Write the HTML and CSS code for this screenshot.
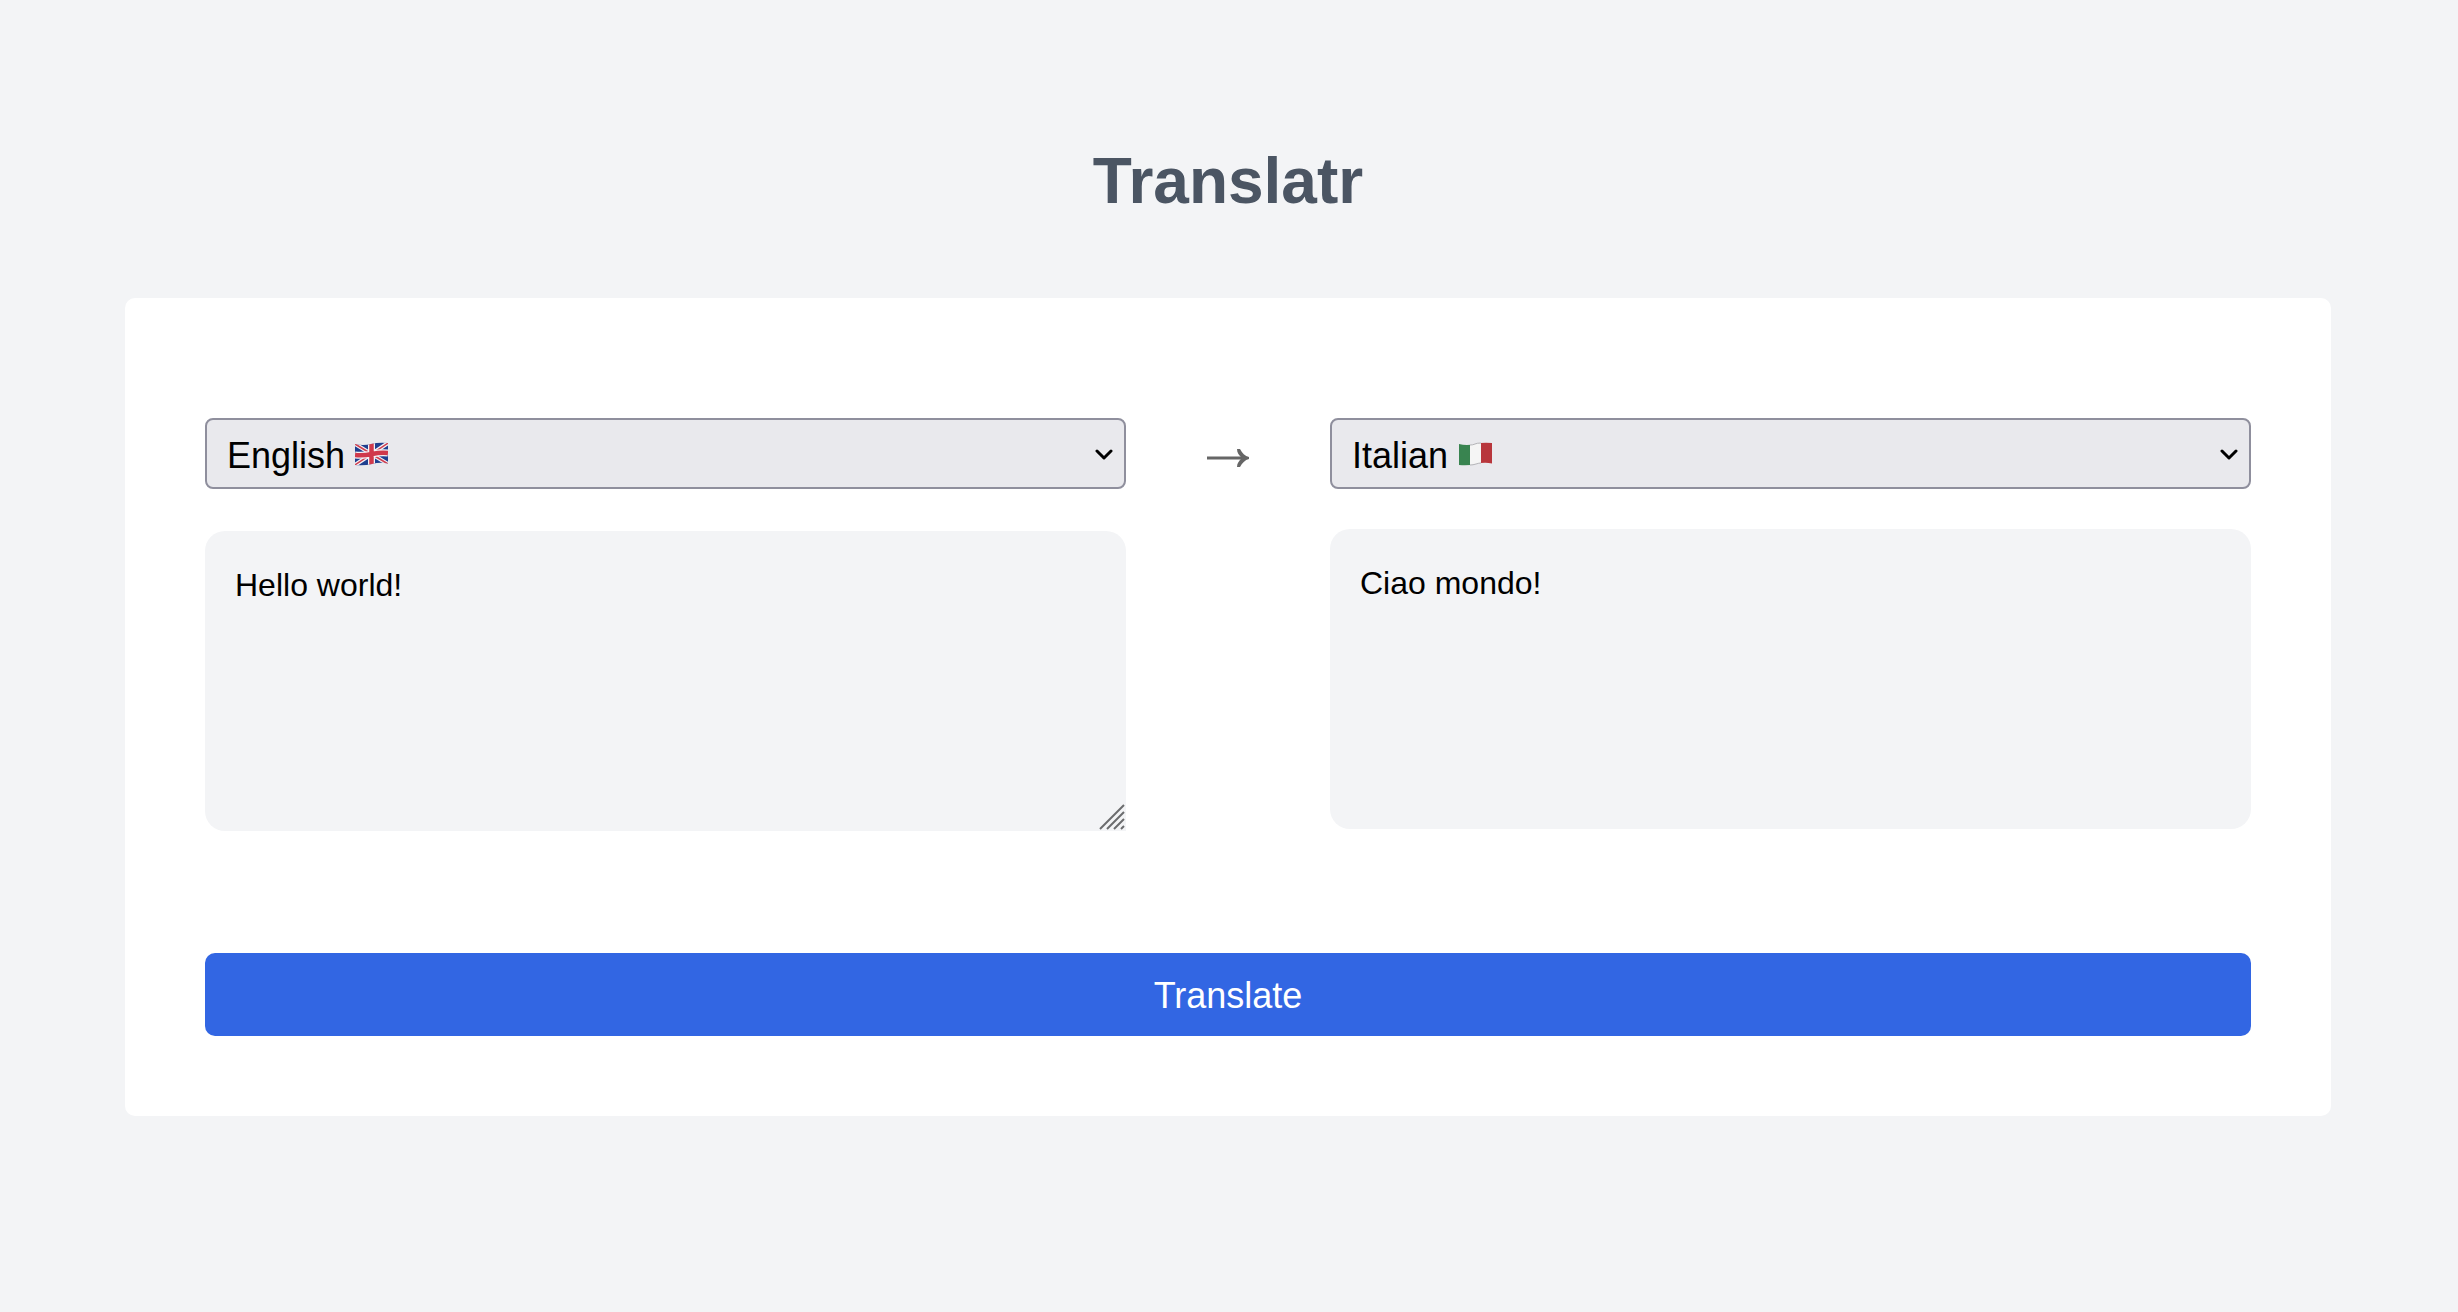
FILE: index.html
```html
<!DOCTYPE html>
<html lang="en">
<head>
<meta charset="utf-8">
<meta name="viewport" content="width=device-width, initial-scale=1">
<title>Translatr</title>
<link rel="stylesheet" href="styles.css">
</head>
<body>
<main class="page">
  <h1 class="title">Translatr</h1>
  <form class="card">
    <div class="columns">
      <div class="column">
        <div class="picker">
          <select class="select" aria-label="Source language">
            <option>English</option>
            <option>French</option>
            <option>Italian</option>
          </select>
          <svg class="flag flag-english" viewBox="0 0 33 24" aria-hidden="true">
            <clipPath id="wave-gb"><path d="M0 2Q8 4 16 2T33 1V21.500Q25 20 17 22T0 23Z"/></clipPath>
            <g clip-path="url(#wave-gb)">
              <path fill="#1f3f8f" d="M0 0h33v24H0z"/>
              <path d="M0 2 33 22M0 23 33 1" stroke="#f3f3f6" stroke-width="4"/>
              <path d="M0 2 33 22M0 23 33 1" stroke="#cf4051" stroke-width="1.500"/>
              <path d="M16.500 0v24M0 13Q8 14 17 12T33 11" fill="none" stroke="#f3f3f6" stroke-width="7"/>
              <path d="M16.500 0v24M0 13Q8 14 17 12T33 11" fill="none" stroke="#d0394b" stroke-width="4.500"/>
            </g>
          </svg>
          <svg class="chevron" viewBox="0 0 18 12" aria-hidden="true"><path d="m2 2 7 7 7-7"/></svg>
        </div>
        <div class="source">
          <textarea class="panel textarea" aria-label="Text to translate">Hello world!</textarea>
          <svg class="grip" viewBox="0 0 28 28" aria-hidden="true"><path d="M2 26 26 2M9 26 26 9M16 26l10-10M23 26l3-3"/></svg>
        </div>
      </div>
      <svg class="arrow" viewBox="0 0 44 20" aria-hidden="true"><path class="arrow-line" d="M1 10h38"/><path d="M31 1h3C36 5 39 8 43 9v2c-4 1-7 4-9 8h-3c0-4 2-6 5-9-3-3-5-5-5-9Z"/></svg>
      <div class="column">
        <div class="picker">
          <select class="select" aria-label="Target language">
            <option>Italian</option>
            <option>English</option>
            <option>French</option>
          </select>
          <svg class="flag flag-italian" viewBox="0 0 33 24" aria-hidden="true">
            <clipPath id="wave-it"><path d="M0 2Q8 4 16 2T33 1V21.500Q25 20 17 22T0 23Z"/></clipPath>
            <g clip-path="url(#wave-it)">
              <path fill="#f5f5f5" d="M0 0h33v24H0z"/>
              <path fill="#398450" d="M0 0h11v24H0z"/>
              <path fill="#b8363c" d="M22 0h11v24H22z"/>
            </g>
            <path d="M11 3Q14 3 16 2T22 1M11 23Q14 23 17 22T22 21" fill="none" stroke="#b4b4b8"/>
          </svg>
          <svg class="chevron" viewBox="0 0 18 12" aria-hidden="true"><path d="m2 2 7 7 7-7"/></svg>
        </div>
        <output class="panel">Ciao mondo!</output>
      </div>
    </div>
    <button class="submit" type="button">Translate</button>
  </form>
</main>
</body>
</html>
```
FILE: styles.css
```css
* {
  box-sizing: border-box;
}

body {
  margin: 0;
  background: #f3f4f6;
  color: #000;
  font-family: "Liberation Sans", Arial, sans-serif;
}

.page {
  padding: 145px 127px 80px 125px;
}

.title {
  margin: 0 0 81px;
  color: #4b5563;
  font-size: 64px;
  line-height: 72px;
  text-align: center;
}

.card {
  display: flex;
  flex-direction: column;
  gap: 120px;
  padding: 120px 80px 80px;
  border-radius: 10px;
  background: #fff;
}

.columns {
  display: grid;
  grid-template-columns: 1fr 44px 1fr;
  column-gap: 80px;
  align-items: start;
}

.column {
  display: flex;
  flex-direction: column;
  gap: 40px;
}

.picker,
.source {
  position: relative;
  display: flex;
}

.select {
  appearance: none;
  width: 100%;
  height: 71px;
  padding: 3px 48px 0 20px;
  border: 2px solid #8f8f9d;
  border-radius: 8px;
  background: #e9e9ed;
  color: inherit;
  font: 36px "Liberation Sans", Arial, sans-serif;
}

.flag,
.chevron,
.grip {
  position: absolute;
  pointer-events: none;
}

.flag {
  top: 24px;
  width: 33px;
  height: 24px;
}

.flag-english {
  left: 150px;
}

.flag-italian {
  left: 129px;
}

.chevron {
  top: 31px;
  right: 13px;
  width: 18px;
  height: 12px;
  fill: none;
  stroke: #000;
  stroke-width: 3px;
  stroke-linecap: round;
  stroke-linejoin: round;
}

.arrow {
  width: 44px;
  height: 20px;
  margin-top: 30px;
  fill: #666;
}

.arrow-line {
  stroke: #666;
  stroke-width: 3px;
}

.panel {
  display: block;
  width: 100%;
  height: 300px;
  padding: 32px 30px;
  border: 0;
  border-radius: 20px;
  background: #f3f4f6;
  color: inherit;
  font: 32px/44px "Liberation Sans", Arial, sans-serif;
}

.source {
  padding: 2px 0;
}

.textarea {
  border-bottom-right-radius: 0;
  resize: none;
}

.grip {
  right: 0;
  bottom: 2px;
  width: 28px;
  height: 28px;
  fill: none;
  stroke: #6b6c6e;
  stroke-width: 2px;
}

.submit {
  height: 83px;
  padding: 2px 0 0;
  border: 0;
  border-radius: 10px;
  background: #3266e3;
  color: #fff;
  font: 36px "Liberation Sans", Arial, sans-serif;
}
```
